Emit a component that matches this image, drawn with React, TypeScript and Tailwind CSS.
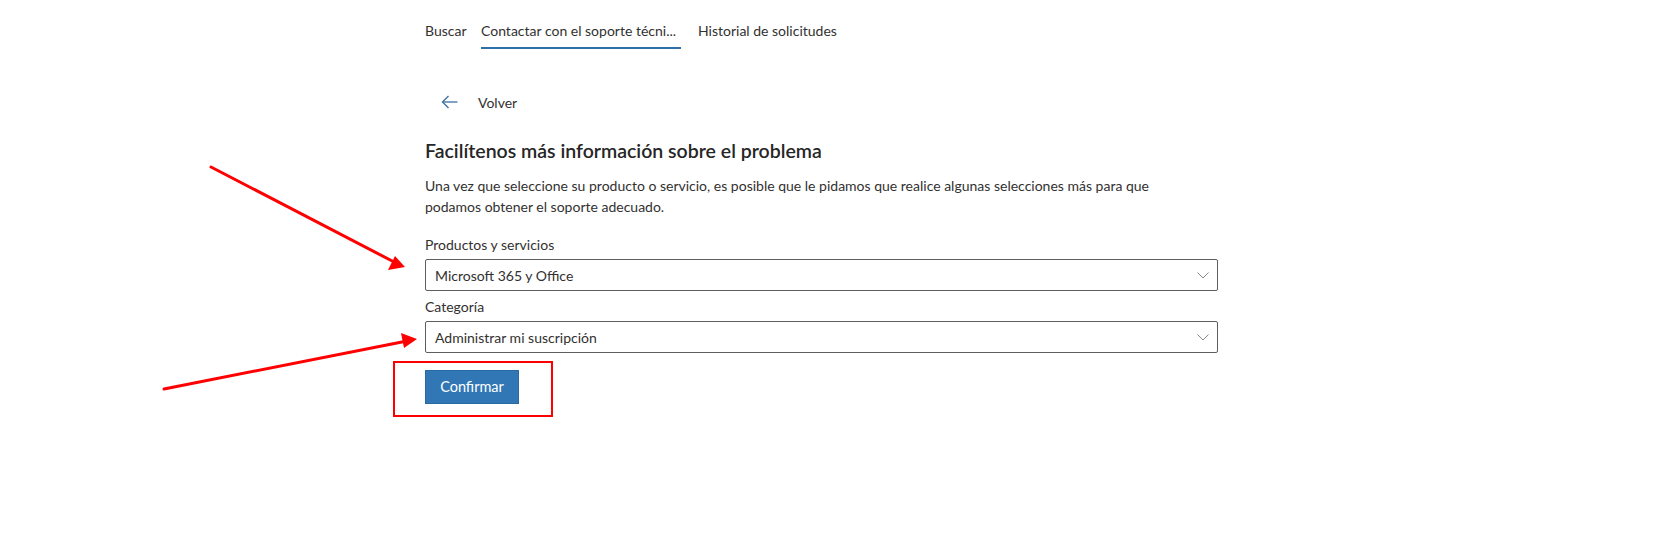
const font = { fontFamily: 'Lato, "Open Sans", Arial, sans-serif' };

interface SelectBoxProps {
  label: string;
  value: string;
  labelGap: string;
}

const SelectBox = ({ label, value, labelGap }: SelectBoxProps) => {
  return (
    <div className={`flex flex-col ${labelGap}`}>
      <div className="text-[14px] leading-5 text-[#323130]">{label}</div>
      <div className="mt-[4px] h-[32px] w-full flex items-center justify-between border border-[#605e5c] rounded-[2px] pl-[9px] pr-[8px] text-[14px] text-[#323130]">
        <span>{value}</span>
        <svg width="12" height="7" viewBox="0 0 12 7" fill="none" stroke="#8a8886" strokeWidth="1">
          <path d="M0.5 0.5L6 6L11.5 0.5" />
        </svg>
      </div>
    </div>
  );
};

const App = () => {
  return (
    <div className="relative min-h-screen bg-white" style={font}>
      <div className="pl-[425px] w-[1218px]">
        <nav className="flex items-start pt-[21px] text-[14px] text-[#323130]">
          <div className="w-[56px] leading-5 pb-[6px]">Buscar</div>
          <div className="w-[200px] leading-5 pb-[6px] border-b-2 border-[#2f6fa8] whitespace-nowrap">
            Contactar con el soporte técni...
          </div>
          <div className="ml-[17px] leading-5 pb-[6px]">Historial de solicitudes</div>
        </nav>

        <div className="mt-[43px] flex items-center pl-[16px] h-[20px]">
          <svg width="17" height="14" viewBox="0 0 17 14" fill="none" stroke="#3a6ea5" strokeWidth="1.3">
            <path d="M16.5 7H1.5" />
            <path d="M7.5 1L1.5 7L7.5 13" />
          </svg>
          <span className="ml-[20px] text-[14px] text-[#323130]">Volver</span>
        </div>

        <h2 className="mt-[25px] text-[19.5px] leading-7 font-semibold text-[#262626]">
          Facilítenos más información sobre el problema
        </h2>
        <p className="mt-[10px] text-[14px] leading-[21px] text-[#323130] pr-[50px]">
          Una vez que seleccione su producto o servicio, es posible que le pidamos que realice algunas selecciones más para que podamos obtener el soporte adecuado.
        </p>

        <SelectBox label="Productos y servicios" value="Microsoft 365 y Office" labelGap="mt-[18px]" />
        <SelectBox label="Categoría" value="Administrar mi suscripción" labelGap="mt-[6px]" />

        <div className="relative mt-[17px] w-fit">
          <button className="w-[94px] h-[34px] bg-[#3277b5] border border-[#2a6aa3] text-white text-[14.5px]">
            Confirmar
          </button>
          <div className="absolute left-[-32px] top-[-9px] w-[160px] h-[56px] border-2 border-[#ff0000]" />
        </div>
      </div>

      {/* red annotation arrows */}
      <svg className="absolute left-0 top-0 pointer-events-none" width="1666" height="557">
        <line x1="211" y1="167" x2="396" y2="263" stroke="#ff0000" strokeWidth="3" strokeLinecap="round" />
        <polygon points="405,267 388,270 395,256" fill="#ff0000" />
        <line x1="164" y1="389" x2="407" y2="341" stroke="#ff0000" strokeWidth="3" strokeLinecap="round" />
        <polygon points="417,339 404,348 401,333" fill="#ff0000" />
      </svg>
    </div>
  );
};

export default App;
